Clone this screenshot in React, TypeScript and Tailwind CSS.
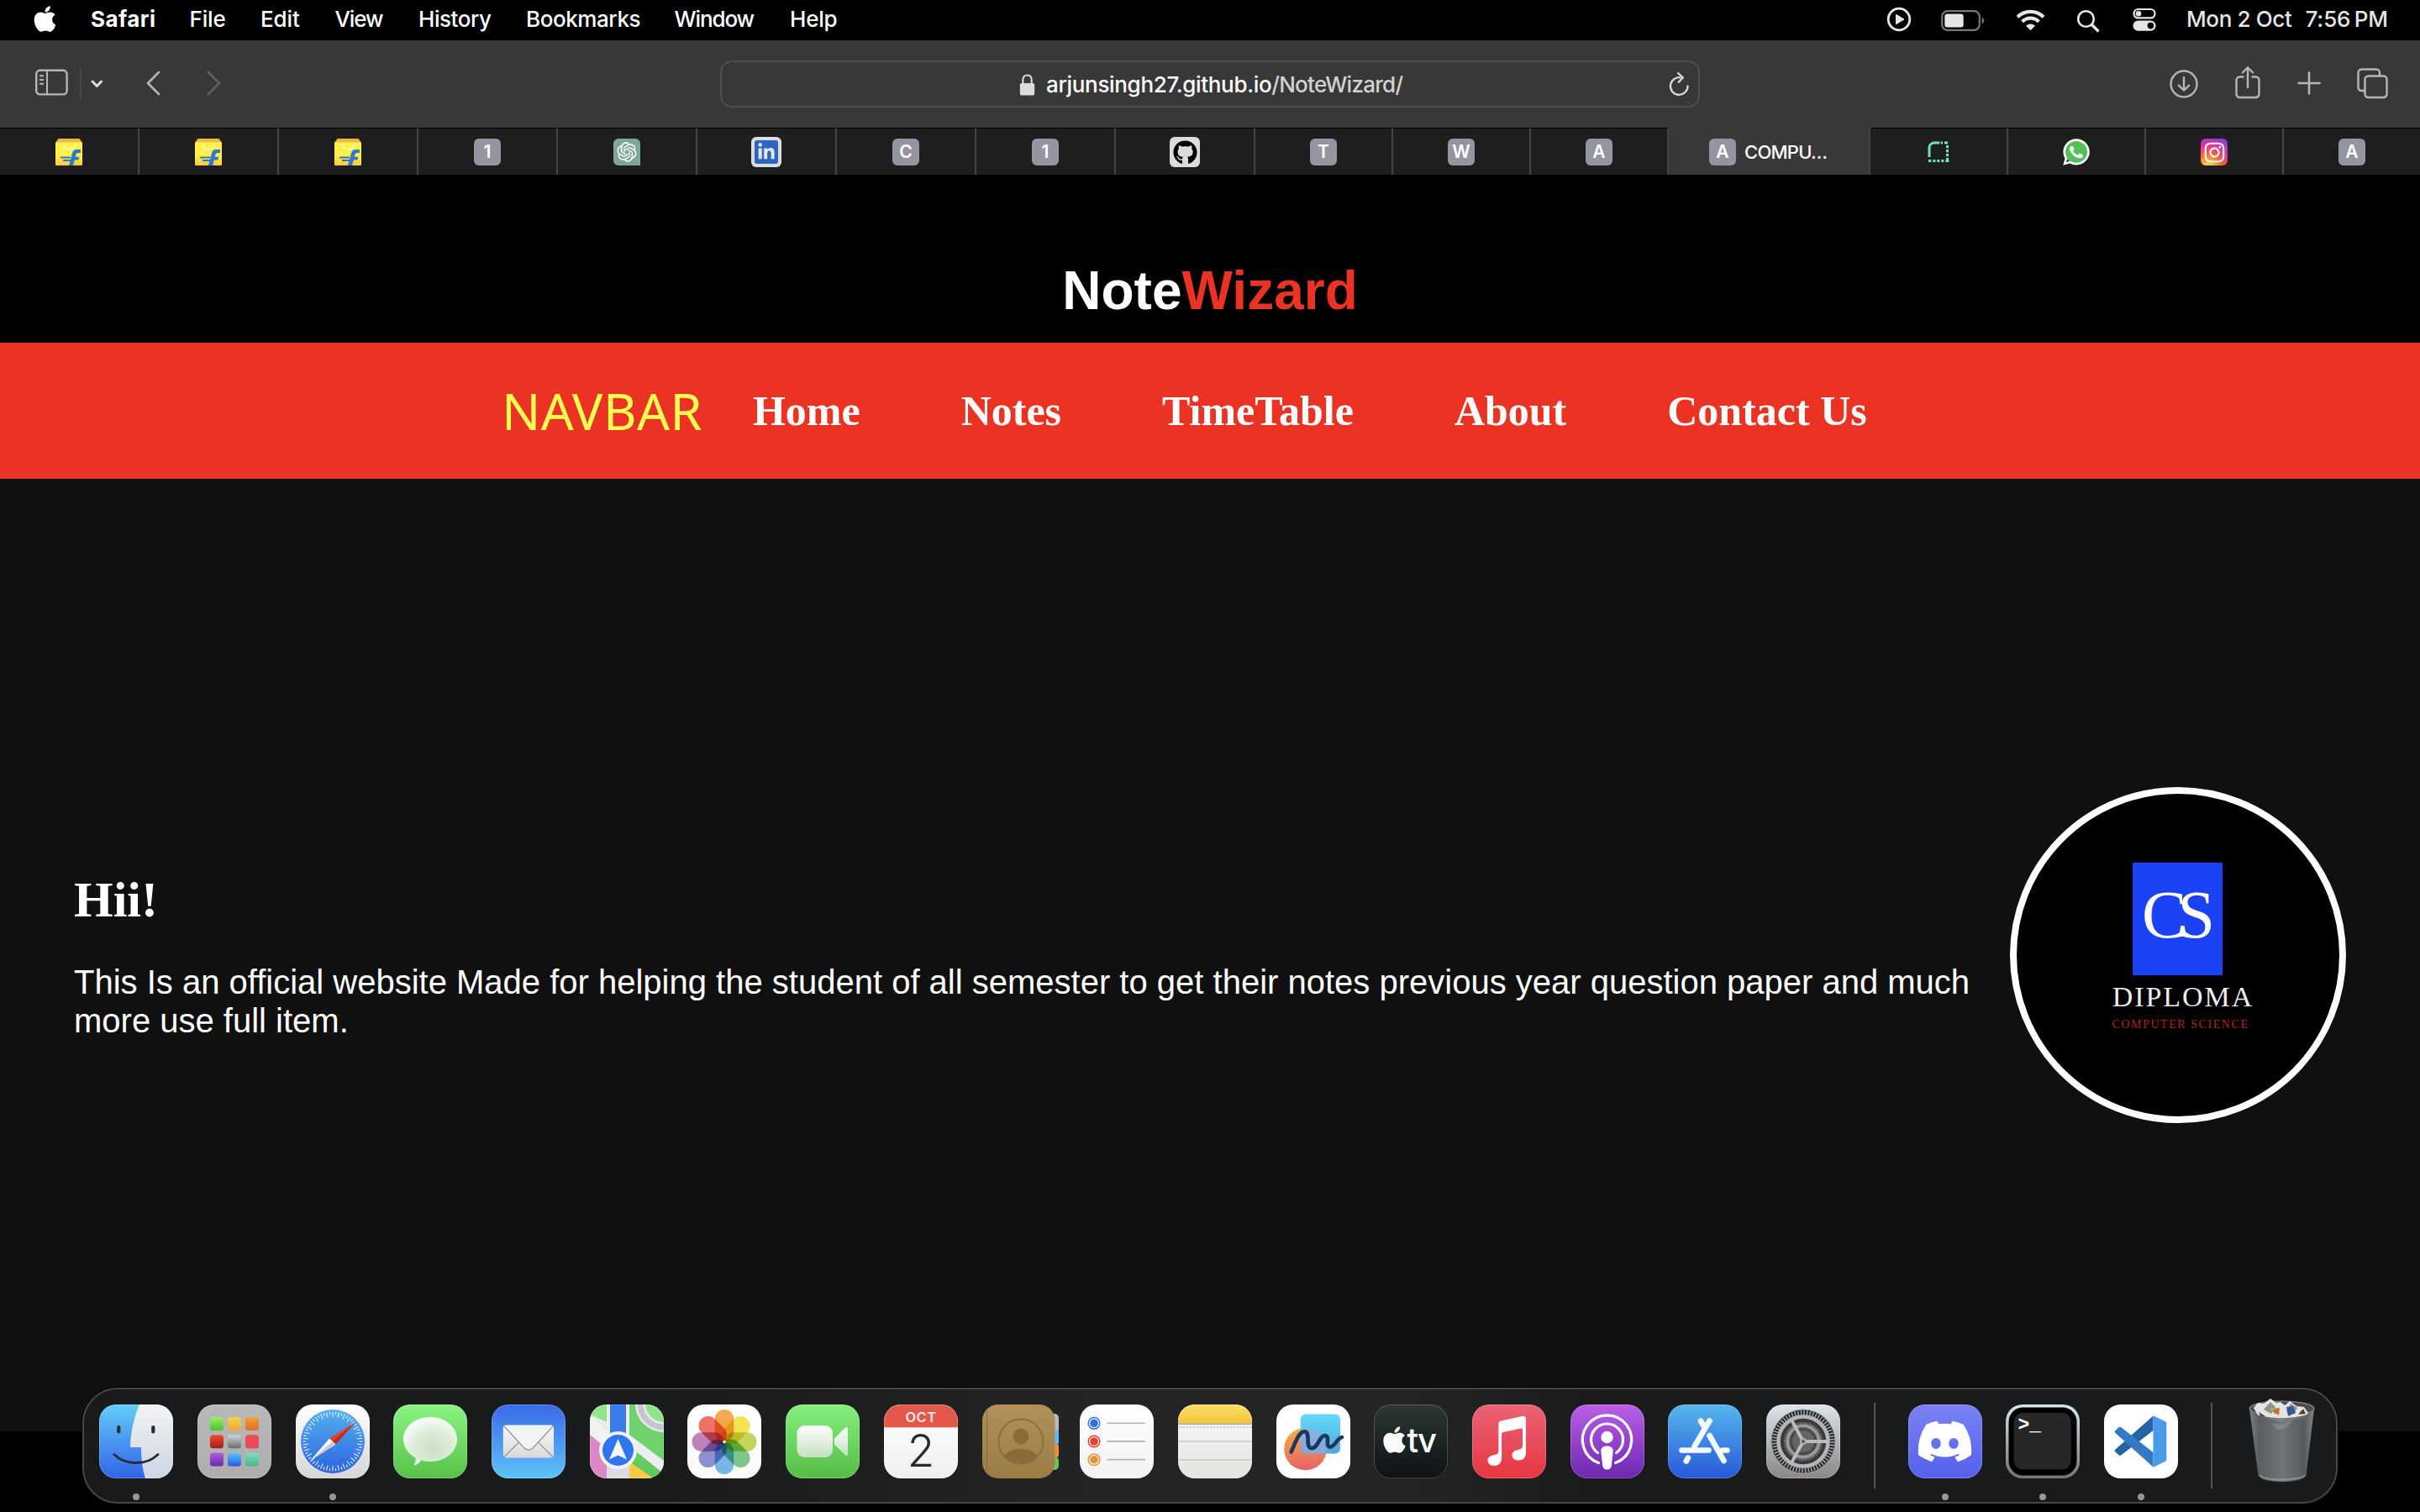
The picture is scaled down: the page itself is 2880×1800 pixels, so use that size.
import type { ReactNode } from "react";
import { FaApple, FaDiscord, FaGithub, FaInstagram, FaLinkedinIn, FaWhatsapp } from "react-icons/fa6";
import { RiOpenaiFill } from "react-icons/ri";

/* ---------- macOS menu bar ---------- */

const menus: [string, string][] = [
  ["File", "w-[84.500px] tracking-[-0.14px]"],
  ["Edit", "w-[88.500px] tracking-[-0.1px]"],
  ["View", "w-[99.500px] tracking-[-1.1px]"],
  ["History", "w-[128px] tracking-[-0.45px]"],
  ["Bookmarks", "w-[176.500px] tracking-[-0.42px]"],
  ["Window", "w-[137.500px] tracking-[-1.1px]"],
  ["Help", "tracking-[-0.23px]"],
];

function MenuBar() {
  return (
    <header className="flex h-12 shrink-0 items-start bg-black pl-[40px] pr-[38px] text-[26px] font-medium leading-[46px] text-white">
      <span className="mr-[41px] block w-[27px] pt-[5px]">
        <FaApple className="h-[35px] w-[27px]" />
      </span>
      <span className="w-[117.500px] font-bold tracking-[0.43px]">Safari</span>
      {menus.map(([name, cls]) => (
        <span key={name} className={cls}>{name}</span>
      ))}
      <div className="ml-auto flex h-[46px] items-center text-[#e6e6e6]">
        <svg className="mr-[35px] h-[30px] w-[30px]" viewBox="0 0 30 30" fill="none">
          <circle cx="15" cy="15" r="12.8" stroke="#e6e6e6" strokeWidth="2.8" />
          <path d="M11.5 9.3v11.4l9.5-5.7z" fill="#e6e6e6" stroke="#e6e6e6" strokeLinejoin="round" />
        </svg>
        <svg className="mr-[37px] mt-[3px] h-[26px] w-[52px]" viewBox="0 0 52 26" fill="none">
          <rect x="1.2" y="1.2" width="44.6" height="22.6" rx="6.5" stroke="#777" strokeWidth="2.2" />
          <rect x="4.3" y="4.5" width="22.4" height="16" rx="3.2" fill="#e6e6e6" />
          <path d="M48.6 8.5v8c1.6-.7 2.5-2.2 2.5-4s-.9-3.300-2.500-4z" fill="#777" />
        </svg>
        <svg className="mr-[37px] h-[27px] w-[35px]" viewBox="0 0 35 27" fill="none" stroke="#e6e6e6">
          <path d="M2 10.200a22 22 0 0 1 31 0" strokeWidth="4.200" />
          <path d="M7.600 15.800a14 14 0 0 1 19.800 0" strokeWidth="4.200" />
          <path d="M17.500 26.300l-5.500-5.600a8 8 0 0 1 11 0z" fill="#e6e6e6" stroke="none" />
        </svg>
        <svg className="mr-[39px] mt-[3px] h-[28px] w-[28px]" viewBox="0 0 28 28" fill="none" stroke="#e6e6e6" strokeLinecap="round">
          <circle cx="11.500" cy="11.500" r="9.300" strokeWidth="2.600" />
          <path d="M18.500 18.500l7 7" strokeWidth="3.400" />
        </svg>
        <svg className="mr-[36px] h-[28px] w-[28px]" viewBox="0 0 28 28" fill="none">
          <rect x="1.500" y="2" width="25" height="10.400" rx="5.200" stroke="#e6e6e6" strokeWidth="2.200" />
          <circle cx="7" cy="7.200" r="3.300" fill="#e6e6e6" />
          <rect x=".5" y="15.500" width="27" height="12.300" rx="6.100" fill="#e6e6e6" />
          <circle cx="21.400" cy="21.600" r="3.800" fill="#000" />
        </svg>
        <span className="mr-[16px] whitespace-nowrap leading-[46px] tracking-[-0.36px]">Mon 2 Oct</span>
        <span className="whitespace-nowrap leading-[46px] tracking-[-0.1px]">7:56&#8239;PM</span>
      </div>
    </header>
  );
}

/* ---------- Safari toolbar ---------- */

function Toolbar() {
  return (
    <div className="flex h-[104px] shrink-0 items-center bg-[#383838] pl-[41px] pr-[38px]">
      <svg className="-mt-[4px] h-[34px] w-[42px]" viewBox="0 0 42 34" fill="none" stroke="#b6b6b6" strokeWidth="2.400">
        <rect x="2.200" y="2.800" width="36.400" height="28.600" rx="4.500" />
        <path d="M15 3v28M6 9.300h5M6 14h5M6 18.700h5" strokeWidth="2" />
      </svg>
      <div className="ml-[12px] -mt-[1px] h-9 w-[2px] bg-[#4b4b4b]" />
      <svg className="ml-[9px] h-[12px] w-[18px]" viewBox="0 0 18 12" fill="none" stroke="#dcdcdc" strokeWidth="3" strokeLinecap="round" strokeLinejoin="round">
        <path d="M4 3l5.300 5.500L14.600 3" />
      </svg>
      <svg className="ml-[47px] -mt-[2px] h-[32px] w-[22px]" viewBox="0 0 22 32" fill="none" stroke="#b6b6b6" strokeWidth="2.700" strokeLinecap="round" strokeLinejoin="round">
        <path d="M18 3L5 16l13 13" />
      </svg>
      <svg className="ml-[51px] -mt-[2px] h-[32px] w-[22px]" viewBox="0 0 22 32" fill="none" stroke="#606060" strokeWidth="2.700" strokeLinecap="round" strokeLinejoin="round">
        <path d="M4 3l13 13L4 29" />
      </svg>

      <div className="ml-[591px] flex h-[56px] w-[1166px] items-center rounded-[14px] border-2 border-[#4f4f4f] pr-[10px] text-[26px] leading-[56px]">
        <svg className="ml-[354px] mt-[2px] h-[26px] w-[19px]" viewBox="0 0 19 26" fill="none">
          <path d="M4.300 12V7.200C4.300 3.600 6.300 1.500 9.500 1.500s5.200 2.100 5.200 5.700V12" stroke="#dcdcdc" strokeWidth="2.100" />
          <rect x=".8" y="11" width="17.400" height="14.500" rx="2.600" fill="#dcdcdc" />
        </svg>
        <span className="ml-[13px] pt-[1px] font-[450] tracking-[-0.33px] text-white">arjunsingh27.github.io</span>
        <span className="pt-[1px] font-[450] tracking-[-0.72px] text-[#d2d2d2]">/NoteWizard/</span>
        <svg className="ml-auto h-[30px] w-[26px]" viewBox="0 0 26 30" fill="none" stroke="#dcdcdc" strokeWidth="2.200" strokeLinecap="round" strokeLinejoin="round">
          <path d="M14.500 7.300A10.300 10.300 0 1 0 23.500 17.300" />
          <path d="M12 2l5.800 5.400L12.500 13" />
        </svg>
      </div>

      <div className="ml-auto flex items-center">
        <svg className="mr-[42px] -mt-[1px] h-[36px] w-[36px]" viewBox="0 0 36 36" fill="none" stroke="#b6b6b6" strokeWidth="2.400" strokeLinecap="round" strokeLinejoin="round">
          <circle cx="18" cy="18" r="15.500" />
          <path d="M18 10v15.500M11.800 19.500l6.200 6.200 6.200-6.200" />
        </svg>
        <svg className="mr-[43px] -mt-[5px] h-[40px] w-[32px]" viewBox="0 0 32 40" fill="none" stroke="#b6b6b6" strokeWidth="2.400" strokeLinecap="round" strokeLinejoin="round">
          <path d="M10.500 13.500H6.500a4 4 0 0 0-4 4V34a4 4 0 0 0 4 4h19a4 4 0 0 0 4-4V17.500a4 4 0 0 0-4-4h-4" />
          <path d="M16 26V2.800M9.800 8.500L16 2.300l6.200 6.200" />
        </svg>
        <svg className="mr-[42px] -mt-[3px] h-[28px] w-[28px]" viewBox="0 0 28 28" fill="none" stroke="#b6b6b6" strokeWidth="2.600" strokeLinecap="round">
          <path d="M14 1.500v25M1.500 14h25" />
        </svg>
        <svg className="-mt-[3px] h-[38px] w-[38px]" viewBox="0 0 38 38" fill="none" stroke="#b6b6b6" strokeWidth="2.400">
          <path d="M10 28H6.500a4 4 0 0 1-4-4V6.500a4 4 0 0 1 4-4H24a4 4 0 0 1 4 4V10" />
          <rect x="10.500" y="10.500" width="26" height="25.500" rx="4" />
        </svg>
      </div>
    </div>
  );
}

/* ---------- Tab strip ---------- */

function Letter({ children }: { children: ReactNode }) {
  return (
    <span className="flex h-8 w-8 items-center justify-center rounded-[6px] bg-[#9595a1] text-[21px] font-semibold leading-[32px] text-white">
      {children}
    </span>
  );
}

function Flipkart() {
  return (
    <svg className="h-8 w-8" viewBox="0 0 32 32">
      <defs>
        <linearGradient id="bag" x1="0" y1="0" x2="0" y2="1">
          <stop offset=".6" stopColor="#fff04a" />
          <stop offset="1" stopColor="#f7c83c" />
        </linearGradient>
      </defs>
      <path d="M3.500 0h25L32 5v1H0V5z" fill="#f0b83c" />
      <rect y="4.300" width="32" height="27.700" rx="1" fill="url(#bag)" />
      <path d="M9.500 6c.5 4.500 3 7 7 7s6.500-2.500 7-7" fill="none" stroke="#fffbd0" strokeWidth="1.600" />
      <path d="M16 32l3.800-14c.8-3.200 2.500-5 5.400-5H30v4h-2.600c-1.800 0-2.600.8-3 2.400l-.6 2.400h4.400l-.8 3.600h-4.600L21 32z" fill="#2f77d0" />
      <path d="M6 22.500h12M9 26h9" stroke="#2f77d0" strokeWidth="1.800" />
    </svg>
  );
}

function Dashed() {
  return (
    <svg className="h-[26px] w-[26px]" viewBox="0 0 26 26" fill="none" stroke="#6fe3c1" strokeWidth="3">
      <path d="M2 19V8a6 6 0 0 1 6-6h6" />
      <path d="M15.500 2h2.500M20 2h4" />
      <path d="M23.500 5v3.200M23.500 10v3.200M23.500 15v3.200" />
      <path d="M1 23.500h3.400M6.400 23.500h3M11.300 23.500h3M16.300 23.500h3M21.300 23.500h4M23.500 20v4" />
    </svg>
  );
}

function Tab({ children, w }: { children: ReactNode; w: string }) {
  return (
    <div className={`flex shrink-0 items-center justify-center border-r-2 border-t border-r-[#444] border-t-black bg-[#1e1e1e] pt-[1px] ${w}`}>
      {children}
    </div>
  );
}

function TabStrip() {
  const a = "w-[166px]";
  const b = "w-[164px]";
  return (
    <div className="flex h-14 shrink-0 overflow-hidden bg-[#1e1e1e]">
      <Tab w={a}><Flipkart /></Tab>
      <Tab w={a}><Flipkart /></Tab>
      <Tab w={a}><Flipkart /></Tab>
      <Tab w={a}><Letter>1</Letter></Tab>
      <Tab w={a}>
        <span className="flex h-8 w-8 items-center justify-center rounded-tl-[6px] rounded-bl-[6px] rounded-tr-[6px] bg-[#7fa797]">
          <RiOpenaiFill className="h-[28px] w-[28px] text-white" />
        </span>
      </Tab>
      <Tab w={a}>
        <span className="flex h-9 w-9 items-center justify-center rounded-[6px] bg-[#dcdcdc]">
          <span className="flex h-[28px] w-[28px] items-center justify-center rounded-[3px] bg-[#2b66c0]">
            <FaLinkedinIn className="h-[22px] w-[22px] text-[#e6e6e6]" />
          </span>
        </span>
      </Tab>
      <Tab w={a}><Letter>C</Letter></Tab>
      <Tab w={a}><Letter>1</Letter></Tab>
      <Tab w={a}>
        <span className="flex h-9 w-9 items-center justify-center rounded-[6px] bg-[#dcdcdc]">
          <FaGithub className="h-[29px] w-[29px] text-black" />
        </span>
      </Tab>
      <Tab w={b}><Letter>T</Letter></Tab>
      <Tab w={b}><Letter>W</Letter></Tab>
      <Tab w={b}><Letter>A</Letter></Tab>
      <div className="flex w-[240px] shrink-0 items-center border-r-2 border-[#444] bg-[#383838] pl-[48px] pt-[2px]">
        <Letter>A</Letter>
        <span className="ml-[10px] text-[22px] font-medium tracking-[-0.75px] text-white">COMPU…</span>
      </div>
      <Tab w={b}><Dashed /></Tab>
      <Tab w={b}>
        <span className="relative flex h-8 w-8 items-center justify-center">
          <span className="absolute inset-[2px] rounded-full bg-[#55bf58]" />
          <FaWhatsapp className="relative h-[36px] w-[36px] shrink-0 text-white" />
        </span>
      </Tab>
      <Tab w={b}>
        <span className="flex h-8 w-8 items-center justify-center rounded-[6px] bg-[radial-gradient(circle_at_28%_105%,#fdd04a_8%,#f0653a_40%,#e0379b_62%,#8a3ae6_95%)]">
          <FaInstagram className="h-[27px] w-[27px] text-white" />
        </span>
      </Tab>
      <Tab w={b}><Letter>A</Letter></Tab>
    </div>
  );
}

/* ---------- Web page ---------- */

function Page() {
  return (
    <main className="flex grow flex-col bg-black">
      <div className="h-[200px] pt-[106px] text-center font-['Liberation_Sans',sans-serif] text-[64px] font-bold leading-[64px] text-white">
        Note<span className="text-[#ea3323]">Wizard</span>
      </div>
      <nav className="flex h-[162px] items-center bg-[#ea3323] pl-[597px]">
        <span className="mr-[60px] font-['Noto_Sans',sans-serif] text-[61px] leading-[80px] tracking-[0.47px] text-[#fcff53]">NAVBAR</span>
        <ul className="flex gap-[120px] whitespace-nowrap font-['Liberation_Serif',serif] text-[50px] font-bold leading-[60px] text-white">
          <li>Home</li>
          <li>Notes</li>
          <li>TimeTable</li>
          <li>About</li>
          <li>Contact Us</li>
        </ul>
      </nav>
      <section className="flex h-[1134px] items-center justify-between bg-[#101010] pl-[88px] pr-[88px] text-white">
        <div className="w-[2280px]">
          <h1 className="font-['Liberation_Serif',serif] text-[60px] font-bold leading-[68px]">Hii!</h1>
          <p className="mt-[41px] font-['Liberation_Sans',sans-serif] text-[40px] leading-[46px]">
            This Is an official website Made for helping the student of all semester to get their notes previous year question paper and much more use full item.
          </p>
        </div>
        <div className="flex h-[400px] w-[400px] flex-col items-center rounded-full border-8 border-white bg-black pt-[82px] font-['Liberation_Serif',serif]">
          <div className="mr-[1px] flex h-[134px] w-[107px] items-center justify-center bg-[#1c42f5] pb-[11px]">
            <span className="block pr-[9px] text-[80px] leading-[80px] tracking-[-11px] text-white">CS</span>
          </div>
          <div className="mt-[6px] ml-[12px] text-[34px] leading-[40px] tracking-[1.94px] text-[#ececec]">DIPLOMA</div>
          <div className="mt-[3px] ml-[6px] whitespace-nowrap text-[14px] leading-[20px] tracking-[1.56px] text-[#b02418]">COMPUTER SCIENCE</div>
        </div>
      </section>
    </main>
  );
}

/* ---------- Dock ---------- */

function Grad({ id, from, to }: { id: string; from: string; to: string }) {
  return (
    <linearGradient id={id} x1="0" y1="0" x2="0" y2="1">
      <stop stopColor={from} />
      <stop offset="1" stopColor={to} />
    </linearGradient>
  );
}

function Tile({ id, from, to, children }: { id: string; from: string; to: string; children?: ReactNode }) {
  return (
    <svg className="h-[88px] w-[88px] overflow-visible" viewBox="0 0 88 88">
      <defs>
        <Grad id={`${id}-bg`} from={from} to={to} />
        <clipPath id={`${id}-clip`}>
          <rect width="88" height="88" rx="20" />
        </clipPath>
      </defs>
      <g clipPath={`url(#${id}-clip)`}>
        <rect width="88" height="88" fill={`url(#${id}-bg)`} />
        {children}
      </g>
      <rect x=".5" y=".5" width="87" height="87" rx="19.500" fill="none" stroke="#fff" strokeOpacity=".2" />
    </svg>
  );
}

function Finder() {
  return (
    <Tile id="finder" from="#62cdf8" to="#3263e9">
      <defs><Grad id="face" from="#f3f3f3" to="#cdd7e4" /></defs>
      <path d="M48 0C42 14 38 30 37 49c0 1.500.5 2 2 2h11c0 13 1.500 26 5 37h35V0z" fill="url(#face)" />
      <path d="M23.300 27v5.500M64.300 27v5.500" stroke="#26292e" strokeWidth="4.200" strokeLinecap="round" />
      <path d="M18 59.500c7 7 15.500 10 26 10s19-3 26-10" fill="none" stroke="#26292e" strokeWidth="2.800" strokeLinecap="round" />
    </Tile>
  );
}

const pads: [string, string][] = [
  ["#97f06c", "#4fc02f"], ["#f8d24b", "#eda634"], ["#f0a23a", "#dd6e2c"],
  ["#ec4a37", "#a51e16"], ["#cfd5da", "#6b6e70"], ["#f04a59", "#e8475e"],
  ["#ac5ee0", "#6b2aa8"], ["#58c8fa", "#2a57e4"], ["#7fdcc0", "#4cb585"],
];

function Launchpad() {
  return (
    <Tile id="launch" from="#b9b9b9" to="#adadad">
      <defs>{pads.map(([f, t], i) => <Grad key={i} id={`pad${i}`} from={f} to={t} />)}</defs>
      {pads.map((_, i) => (
        <rect key={i} x={15 + (i % 3) * 21} y={15 + Math.floor(i / 3) * 21.200} width="16" height="16" rx="3.500" fill={`url(#pad${i})`} />
      ))}
    </Tile>
  );
}

function Safari() {
  return (
    <Tile id="safari" from="#ffffff" to="#d6d6d6">
      <defs><Grad id="compass" from="#53b1f0" to="#2c63df" /></defs>
      <circle cx="44" cy="44" r="38" fill="url(#compass)" />
      {Array.from({ length: 60 }, (_, i) => (
        <path key={i} d={i % 2 ? "M44 8.500v3.500" : "M44 8.500v6.500"} stroke="#e4f1ff" strokeWidth="1.100" transform={`rotate(${i * 6} 44 44)`} />
      ))}
      <path d="M71 21L40 40.500l7.500 7z" fill="#e8402f" />
      <path d="M71 21L43.700 44l3.800 3.500z" fill="#b92f25" />
      <path d="M17.500 66.500L40 40.500l7.500 7z" fill="#fff" />
      <path d="M17.500 66.500L43.700 44l3.800 3.500z" fill="#c9cdd3" />
    </Tile>
  );
}

function Messages() {
  return (
    <Tile id="msg" from="#8af584" to="#57c147">
      <defs>
        <radialGradient id="bubble" cx=".55" cy=".65" r=".65">
          <stop stopColor="#ccdec6" />
          <stop offset=".6" stopColor="#dfeedb" />
          <stop offset="1" stopColor="#fbfdfb" />
        </radialGradient>
      </defs>
      <path d="M44 15c18 0 32 11.800 32 26.500S62 68 44 68c-3.700 0-7.300-.5-10.500-1.500C31.500 69.500 28 72 24 72.500c2-2.500 3-5.500 2.500-9C17.500 58.500 12 50.500 12 41.500 12 26.800 26 15 44 15z" fill="url(#bubble)" />
    </Tile>
  );
}

function Mail() {
  return (
    <Tile id="mail" from="#3b6ae8" to="#5fc3f9">
      <defs><Grad id="env" from="#fafafa" to="#d9d9d9" /></defs>
      <rect x="13.800" y="24.500" width="60.200" height="39" rx="4" fill="url(#env)" />
      <path d="M15 62.500l17-17M73 62.500l-17-17" stroke="#9a9a9a" strokeWidth="1.200" fill="none" />
      <path d="M15 26l23.500 25.500c3 3.300 8 3.300 11 0L73 26" fill="#f3f3f3" stroke="#9a9a9a" strokeWidth="1.300" />
    </Tile>
  );
}

function Maps() {
  return (
    <Tile id="maps" from="#7ee276" to="#5cc65c">
      <path d="M0 12L34 40 0 70z" fill="#f1f1f4" />
      <path d="M0 36l30 24v28H0z" fill="#de87c8" />
      <path d="M44 88V66l32 22z" fill="#f7cb45" />
      <path d="M0 12l90 72v-18L0 -8z" fill="#eeeef2" />
      <path d="M0 -8v20l20 9V0H0z" fill="#93e58a" />
      <path d="M20 0h27v88H20z" fill="#f0f0f4" />
      <path d="M47 0h41v67L47 36z" fill="#6dd36a" />
      <circle cx="88" cy="-1" r="28" fill="#8fe388" stroke="#e9e9ef" strokeWidth="12" />
      <circle cx="88" cy="-1" r="28" fill="none" stroke="#c3c5d0" strokeWidth="7" />
      <path d="M24 0h19v40H24z" fill="#3a7bec" />
      <path d="M20 88V70h27v18z" fill="#dcdce2" />
      <circle cx="33.500" cy="54.500" r="22.500" fill="#f3f3f7" />
      <circle cx="33.500" cy="54.500" r="18.500" fill="#2f75f2" />
      <path d="M33.500 41L44 65.500l-10.500-5-10.500 5z" fill="#f6f7fb" />
    </Tile>
  );
}

const petals = ["#f29b33", "#f3df35", "#bcd23e", "#67c07a", "#62aee6", "#7d80c8", "#b56fae", "#ec5a4d"];

function Photos() {
  return (
    <Tile id="photos" from="#ffffff" to="#fafafa">
      {petals.map((c, i) => (
        <rect key={c} className="mix-blend-multiply" x="32.800" y="6" width="22.400" height="38" rx="11.200" fill={c} fillOpacity=".86" transform={`rotate(${i * 45} 44 44.500)`} />
      ))}
      <circle cx="44" cy="44.500" r="1.800" fill="#fff" />
    </Tile>
  );
}

function FaceTime() {
  return (
    <Tile id="ft" from="#86f07f" to="#53bd45">
      <defs><Grad id="cam" from="#ffffff" to="#c4e0bf" /></defs>
      <rect x="13.500" y="25" width="42.500" height="38" rx="9" fill="url(#cam)" />
      <path d="M58 40.500L70.500 28c1.500-1.400 3.500-.8 3.500 1.300v29.400c0 2.100-2 2.700-3.500 1.300L58 47.500z" fill="url(#cam)" />
    </Tile>
  );
}

function Calendar() {
  return (
    <Tile id="cal" from="#ffffff" to="#f1f0ee">
      <rect width="88" height="27.300" fill="#e5574b" />
      <text x="44" y="21" textAnchor="middle" fontSize="16.500" fontWeight="600" letterSpacing=".5" fill="#f6ece9">OCT</text>
      <text x="44" y="74" textAnchor="middle" fontSize="53" fontWeight="350" fill="#2a2a2a">2</text>
    </Tile>
  );
}

function Contacts() {
  return (
    <svg className="h-[88px] w-[88px] overflow-visible" viewBox="0 0 88 88">
      <defs><Grad id="leather" from="#b09159" to="#9c7c45" /></defs>
      <rect x="78" y="11" width="13" height="24" rx="5" fill="#b9b9b7" />
      <rect x="78" y="31" width="13" height="17" rx="3" fill="#63b8f2" />
      <rect x="78" y="47" width="13" height="16" rx="3" fill="#f0922f" />
      <rect x="78" y="62" width="13" height="16" rx="5" fill="#66c85a" />
      <rect width="86.500" height="88" rx="19" fill="url(#leather)" />
      <path d="M5.500 8v72" stroke="#8c6d39" strokeWidth="1" />
      <circle cx="46" cy="44" r="26.500" fill="none" stroke="#8a6d3c" strokeWidth="1.800" />
      <circle cx="46" cy="38" r="9.500" fill="#8a6c3b" />
      <path d="M26 61.500c3.500-5.500 11-8.700 20-8.700s16.500 3.200 20 8.700c-4.500 6.200-12 9.700-20 9.700s-15.500-3.500-20-9.700z" fill="#8a6c3b" />
    </svg>
  );
}

function Reminders() {
  return (
    <Tile id="rem" from="#ffffff" to="#f3f2f0">
      {["#2f6fee", "#e2412f", "#ea9331"].map((c, i) => (
        <g key={c}>
          <circle cx="17" cy={22.300 + i * 21.700} r="6.800" fill="none" stroke={c} strokeWidth="1.500" />
          <circle cx="17" cy={22.300 + i * 21.700} r="4.800" fill={c} />
          <path d={`M32.500 ${22.200 + i * 21.700}h45.500`} stroke="#b1b1b6" strokeWidth="1.600" />
        </g>
      ))}
    </Tile>
  );
}

function Notes() {
  return (
    <Tile id="notes" from="#fafafa" to="#e4e3df">
      <defs><Grad id="pad" from="#f9df6c" to="#f5c436" /></defs>
      <rect width="88" height="22.500" fill="url(#pad)" />
      <path d="M0 23.300h88" stroke="#a8a59c" strokeWidth="1.600" />
      <path d="M2 27h86" stroke="#c0c0bd" strokeWidth="1.800" strokeDasharray="1.800 2.200" />
      <path d="M0 44h88M0 66h88" stroke="#d2d2d4" strokeWidth="1.800" />
    </Tile>
  );
}

function Freeform() {
  return (
    <Tile id="free" from="#ffffff" to="#ffffff">
      <defs>
        <Grad id="ff-c" from="#f3b13f" to="#e8606a" />
        <Grad id="ff-b" from="#62dbfb" to="#57a5d8" />
      </defs>
      <circle cx="34.500" cy="53" r="25.300" fill="url(#ff-c)" />
      <rect x="28.700" y="11.500" width="47.300" height="47" rx="6" fill="url(#ff-b)" />
      <path d="M28.700 28.500a25.300 25.300 0 0 1 30.500 30H34.700a6 6 0 0 1-6-6z" fill="#9fa8dc" fillOpacity=".65" />
      <path d="M17.600 56.500C22 48 26 32 33.500 32.300c8 .3 0 19.700 8.500 19.700 8 0 9-15 15.500-15 7.500 0-.5 13.500 6.500 13.500 5.500 0 8-10.500 14-11.500" fill="none" stroke="#17395c" strokeWidth="4.600" strokeLinecap="round" />
    </Tile>
  );
}

function AppleTV() {
  return (
    <Tile id="tv" from="#2b3834" to="#0e1115">
      <FaApple x={6.500} y={24} size={36} color="#fafafa" />
      <text x="39.500" y="57.300" fontSize="40" fontWeight="500" letterSpacing="-2" fill="#fafafa">tv</text>
    </Tile>
  );
}

function Music() {
  return (
    <Tile id="music" from="#ea6377" to="#e6373f">
      <path d="M31.400 23c0-2 1-3.100 3-3.600l25-5.400c2.500-.5 4.500.3 4.500 2.800V58c0 5-3.500 8.500-8.900 8.500-4.500 0-7.500-2.600-7.500-6 0-3.700 3-5.800 7.500-6.700 3.500-.7 5-1.700 5-4.500V30.500c0-1.700-.8-2.200-2.300-1.900l-20.500 4.500c-1.500.3-2.100 1-2.100 2.500v28c0 5.500-3.300 9.400-8.900 9.400-4.500 0-7.700-2.600-7.700-6.200 0-3.800 3-5.900 7.700-6.800 3.700-.7 5.200-1.700 5.200-4.600z" fill="#fff" />
    </Tile>
  );
}

function Podcasts() {
  return (
    <Tile id="pod" from="#bb5fe8" to="#6d27ae">
      <g fill="none" stroke="#fff" strokeLinecap="round">
        <path d="M33.500 69.500a29.200 29.200 0 1 1 20 0" strokeWidth="3.200" />
        <path d="M32.500 57.500a19 19 0 1 1 22 0" strokeWidth="3.200" />
      </g>
      <circle cx="43.500" cy="39" r="7.200" fill="#fff" />
      <path d="M43.500 49.500c5 0 7.500 2.300 7.100 6.500l-1.700 16.500c-.4 3.300-2.300 5-5.400 5s-5-1.700-5.400-5L36.400 56c-.4-4.200 2.100-6.500 7.100-6.500z" fill="#fff" />
    </Tile>
  );
}

function AppStore() {
  return (
    <Tile id="store" from="#56b8ee" to="#2758d8">
      <g stroke="#f5f9ff" strokeWidth="6.600" strokeLinecap="round" fill="none">
        <path d="M39 19.500l3.500 6M49.500 37L66.500 67" />
        <path d="M16.500 54.500h32M65 54.500h5.500" />
        <path d="M49.500 19.500L31.500 50" />
        <path d="M24 63.500l-2.300 4" />
      </g>
    </Tile>
  );
}

function Settings() {
  return (
    <Tile id="set" from="#dbe5ec" to="#8b8784">
      <circle cx="44" cy="44" r="38" fill="#1f2021" stroke="#9fa1a2" strokeWidth="1" />
      <circle cx="44" cy="44" r="34" fill="none" stroke="#9b9c9d" strokeWidth="6" strokeDasharray="1.700 1.860" />
      <circle cx="44" cy="44" r="29.500" fill="#3a3b3c" stroke="#b4b6b7" strokeWidth="4.500" />
      <circle cx="44" cy="44" r="21.500" fill="#555" stroke="#7d7e7f" strokeWidth="3" strokeDasharray="1.500 1.200" />
      <circle cx="44" cy="44" r="18.500" fill="#4a4b4b" stroke="#9a9b9b" strokeWidth="3.600" />
      <circle cx="44" cy="44" r="13" fill="#646463" />
      <path d="M44 44h29M44 44L30 18.500M44 44L30 69.500" stroke="#babcbd" strokeWidth="3.800" />
      <circle cx="44" cy="44" r="4" fill="#a9abac" />
      <circle cx="44" cy="44" r="1.500" fill="#333" />
    </Tile>
  );
}

function Discord() {
  return (
    <Tile id="discord" from="#7a82f2" to="#5560ec">
      <FaDiscord x={9} y={9.500} size={69} color="#fff" />
    </Tile>
  );
}

function Terminal() {
  return (
    <svg className="h-[88px] w-[88px]" viewBox="0 0 88 88">
      <defs><Grad id="rim" from="#d2e6ee" to="#777371" /></defs>
      <rect width="88" height="88" rx="20" fill="url(#rim)" />
      <rect x="3.500" y="3.500" width="81" height="81" rx="17" fill="#000" />
      <rect x="9.700" y="10" width="68" height="67.500" rx="11" fill="#272727" />
      <text x="14.500" y="31" fontSize="23" fontWeight="700" fill="#fff" className="font-['Liberation_Mono',monospace]">&gt;_</text>
    </svg>
  );
}

function VSCode() {
  return (
    <Tile id="code" from="#ffffff" to="#ffffff">
      <path d="M58.500 13.500L13.500 53.500a2 2 0 0 0 0 3l4 3.700c.8.700 2 .8 2.900.1L58.500 31z" fill="#2563a5" />
      <path d="M58.500 74.500L13.500 34a2 2 0 0 1 0-3l4-3.700c.8-.7 2-.8 2.900-.1L58.500 57z" fill="#3478c8" />
      <path d="M58.500 13.200L72.500 20c1.200.6 1.800 1.500 1.800 2.800v42.400c0 1.300-.6 2.200-1.800 2.800l-14 6.800z" fill="#4a9aeb" />
    </Tile>
  );
}

function Trash() {
  return (
    <svg className="h-[88px] w-[88px] overflow-visible" viewBox="0 0 88 88">
      <defs>
        <linearGradient id="can" x1="0" y1="0" x2="1" y2="0">
          <stop stopColor="#85898b" />
          <stop offset=".15" stopColor="#5f6365" />
          <stop offset=".5" stopColor="#777b7d" />
          <stop offset=".85" stopColor="#5c6062" />
          <stop offset="1" stopColor="#8c9092" />
        </linearGradient>
      </defs>
      <ellipse cx="44.500" cy="5" rx="38.500" ry="9" fill="#4b4e50" stroke="#8d9193" strokeWidth="1.200" />
      <path d="M11 4l5-6 7 1 8-6 7 5 5-1 5 4 6-5 8 6 9 1 5 7-4 6-30 5L16 13z" fill="#e4e4e2" />
      <path d="M23 6l8-9 6 6-5 8zM50 8l5-9 8 5-4 7z" fill="#8f8f8d" />
      <path d="M29 4h12l-4 8z" fill="#7fc45a" />
      <path d="M33 7l9-3-1 9z" fill="#d8623c" />
      <path d="M50 3l8-1 3 8-9 4z" fill="#37579a" />
      <path d="M17 9l8 5-5 2zM64 12l6-7 3 6z" fill="#4a4039" />
      <path d="M6 5c3 7 18 11 38.500 11S80 12 83 5l-9.500 79c-1 5-14 8-29 8s-27-3-28-8z" fill="url(#can)" fillOpacity=".93" />
      <path d="M18 84c3 3.500 14 5.500 26.500 5.500S70 87.500 72.500 84" fill="none" stroke="#a4a8aa" strokeWidth="2" strokeOpacity=".6" />
      <path d="M32 22c10 3 18 1 25-5-2 9-10 13-18 13z" fill="#a9adaf" fillOpacity=".35" />
    </svg>
  );
}

function Slot({ children, running }: { children: ReactNode; running?: boolean }) {
  return (
    <div className="flex w-[116.700px] shrink-0 flex-col items-center pt-[6px]">
      {children}
      {running && <span className="mt-[18px] block h-2 w-2 shrink-0 rounded-full bg-[#98989a]" />}
    </div>
  );
}

function Dock() {
  return (
    <div className="absolute left-[98px] top-[1652px] flex h-[138px] w-[2684px] rounded-[42px] border-2 border-[#464747] bg-[linear-gradient(90deg,#191a1b_0%,#191a1b_25%,#242424_45%,#242524_58%,#191a1b_68%,#191a1b_100%)] pl-[4px] pt-[12px] shadow-[0_0_0_1px_#000]">
      <Slot running><Finder /></Slot>
      <Slot><Launchpad /></Slot>
      <Slot running><Safari /></Slot>
      <Slot><Messages /></Slot>
      <Slot><Mail /></Slot>
      <Slot><Maps /></Slot>
      <Slot><Photos /></Slot>
      <Slot><FaceTime /></Slot>
      <Slot><Calendar /></Slot>
      <Slot><Contacts /></Slot>
      <Slot><Reminders /></Slot>
      <Slot><Notes /></Slot>
      <Slot><Freeform /></Slot>
      <Slot><AppleTV /></Slot>
      <Slot><Music /></Slot>
      <Slot><Podcasts /></Slot>
      <Slot><AppStore /></Slot>
      <Slot><Settings /></Slot>
      <div className="ml-[26px] mr-[24px] mt-[4px] h-[102px] w-[2px] shrink-0 bg-[#555]" />
      <Slot running><Discord /></Slot>
      <Slot running><Terminal /></Slot>
      <Slot running><VSCode /></Slot>
      <div className="ml-[25px] mr-[23px] mt-[4px] h-[102px] w-[2px] shrink-0 bg-[#555]" />
      <Slot><Trash /></Slot>
    </div>
  );
}

export default function App() {
  return (
    <div className="relative flex h-[1800px] w-[2880px] flex-col overflow-hidden bg-black font-[Inter,sans-serif]">
      <MenuBar />
      <Toolbar />
      <TabStrip />
      <Page />
      <Dock />
    </div>
  );
}
